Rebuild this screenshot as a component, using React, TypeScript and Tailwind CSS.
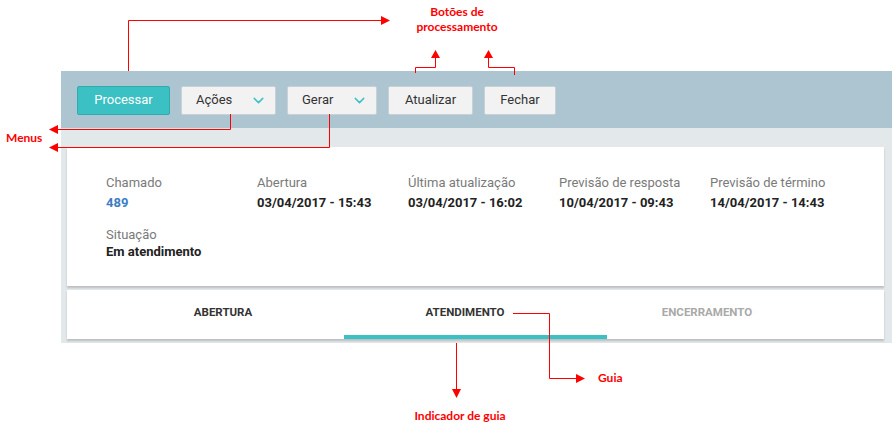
import { ChevronDown } from "lucide-react";

const ui = { fontFamily: "Roboto, 'Liberation Sans', sans-serif" };
const note = { fontFamily: "Lato, 'Liberation Sans', sans-serif" };

const fields = [
  { label: "Chamado", value: "489", link: true },
  { label: "Abertura", value: "03/04/2017 - 15:43" },
  { label: "Última atualização", value: "03/04/2017 - 16:02" },
  { label: "Previsão de resposta", value: "10/04/2017 - 09:43" },
  { label: "Previsão de término", value: "14/04/2017 - 14:43" },
];

const tabs = [
  { name: "ABERTURA", tone: "text-[#333]" },
  { name: "ATENDIMENTO", tone: "text-[#333]" },
  { name: "ENCERRAMENTO", tone: "text-[#a9a9a9]" },
];

const Annotations = () => (
  <svg className="absolute inset-0 pointer-events-none" width="894" height="433">
    <g stroke="#f00" strokeWidth="1" fill="none">
      <path d="M128.5 71 V20.5 H382" />
      <path d="M415.5 73 V67.5 H435.5 V57" />
      <path d="M514.5 75 V67.5 H488.5 V57" />
      <path d="M230.5 114 V129.5 H57" />
      <path d="M329.5 114 V147.5 H57" />
      <path d="M513 313.5 H549.5 V378.5 H577" />
      <path d="M456.5 343 V390" />
    </g>
    <g fill="#f00">
      <polygon points="381,16 390,20.5 381,25" />
      <polygon points="431,58 435.5,50 440,58" />
      <polygon points="484,58 488.5,50 493,58" />
      <polygon points="58,125 49,129.5 58,134" />
      <polygon points="58,143 49,147.5 58,152" />
      <polygon points="576,374 585,378.5 576,383" />
      <polygon points="452,389 456.5,398 461,389" />
    </g>
  </svg>
);

const Label = ({ text, className }: { text: string; className: string }) => (
  <div
    className={`absolute text-[12px] font-bold leading-[14px] text-[#f00] text-center ${className}`}
    style={note}
  >
    {text}
  </div>
);

export default function App() {
  return (
    <div className="relative w-[894px] h-[433px] bg-white overflow-hidden" style={ui}>
      <div className="pt-[71px] pl-[61px]">
        <div className="w-[831px] bg-[#e3e8ea] pb-[4px]">
          {/* toolbar */}
          <div className="h-[57px] bg-[#adc5d1] flex items-center gap-[11px] pl-[16px] pt-[1px]">
            <button className="h-[29px] w-[93px] rounded-[2px] bg-[#3bc0c3] border border-[#2faaad] text-white text-[13px]">
              Processar
            </button>
            <button className="h-[29px] w-[95px] rounded-[2px] bg-[#f2f2f2] border border-[#c8d1d6] text-[#333] text-[13px] flex items-center justify-between pl-[14px] pr-[8px]">
              Ações
              <ChevronDown className="w-[17px] h-[17px] text-[#3bc0c3]" strokeWidth={2} />
            </button>
            <button className="h-[29px] w-[90px] rounded-[2px] bg-[#f2f2f2] border border-[#c8d1d6] text-[#333] text-[13px] flex items-center justify-between pl-[14px] pr-[8px]">
              Gerar
              <ChevronDown className="w-[17px] h-[17px] text-[#3bc0c3]" strokeWidth={2} />
            </button>
            <button className="h-[29px] w-[85px] rounded-[2px] bg-[#f2f2f2] border border-[#c8d1d6] text-[#333] text-[13px]">
              Atualizar
            </button>
            <button className="h-[29px] w-[72px] rounded-[2px] bg-[#f2f2f2] border border-[#c8d1d6] text-[#333] text-[13px]">
              Fechar
            </button>
          </div>

          <div className="h-[19px]" />

          {/* detail card */}
          <div className="ml-[6px] w-[817px] h-[139px] bg-white shadow-[0_2px_2px_rgba(0,0,0,0.18)] pl-[39px] pt-[28px]">
            <div className="flex">
              {fields.map((f) => (
                <div key={f.label} className="w-[151px]">
                  <div className="text-[13px] leading-[16px] text-[#7a7a7a]">{f.label}</div>
                  <div
                    className={`mt-[4px] text-[13px] leading-[16px] font-bold ${
                      f.link ? "text-[#3b7dc4]" : "text-[#222]"
                    }`}
                  >
                    {f.value}
                  </div>
                </div>
              ))}
            </div>
            <div className="mt-[16px]">
              <div className="text-[13px] leading-[16px] text-[#7a7a7a]">Situação</div>
              <div className="mt-[1px] text-[13px] leading-[16px] font-bold text-[#222]">Em atendimento</div>
            </div>
          </div>

          {/* tabs card */}
          <div className="relative mt-[4px] ml-[6px] w-[817px] h-[49px] bg-white shadow-[0_2px_2px_rgba(0,0,0,0.18)] flex pl-[35px]">
            {tabs.map((t) => (
              <div
                key={t.name}
                className={`w-[242px] h-[45px] flex items-center justify-center text-[11.5px] font-bold ${t.tone}`}
              >
                {t.name}
              </div>
            ))}
            <div className="absolute left-[277px] bottom-0 w-[263px] h-[4px] bg-[#3bc0c3]" />
          </div>
        </div>
      </div>

      <Annotations />
      <Label text="Botões de" className="left-[407px] top-[5px] w-[100px]" />
      <Label text="processamento" className="left-[407px] top-[20px] w-[100px]" />
      <Label text="Menus" className="left-[6px] top-[131px]" />
      <Label text="Guia" className="left-[598px] top-[371px]" />
      <Label text="Indicador de guia" className="left-[410px] top-[409px] w-[100px]" />
    </div>
  );
}
